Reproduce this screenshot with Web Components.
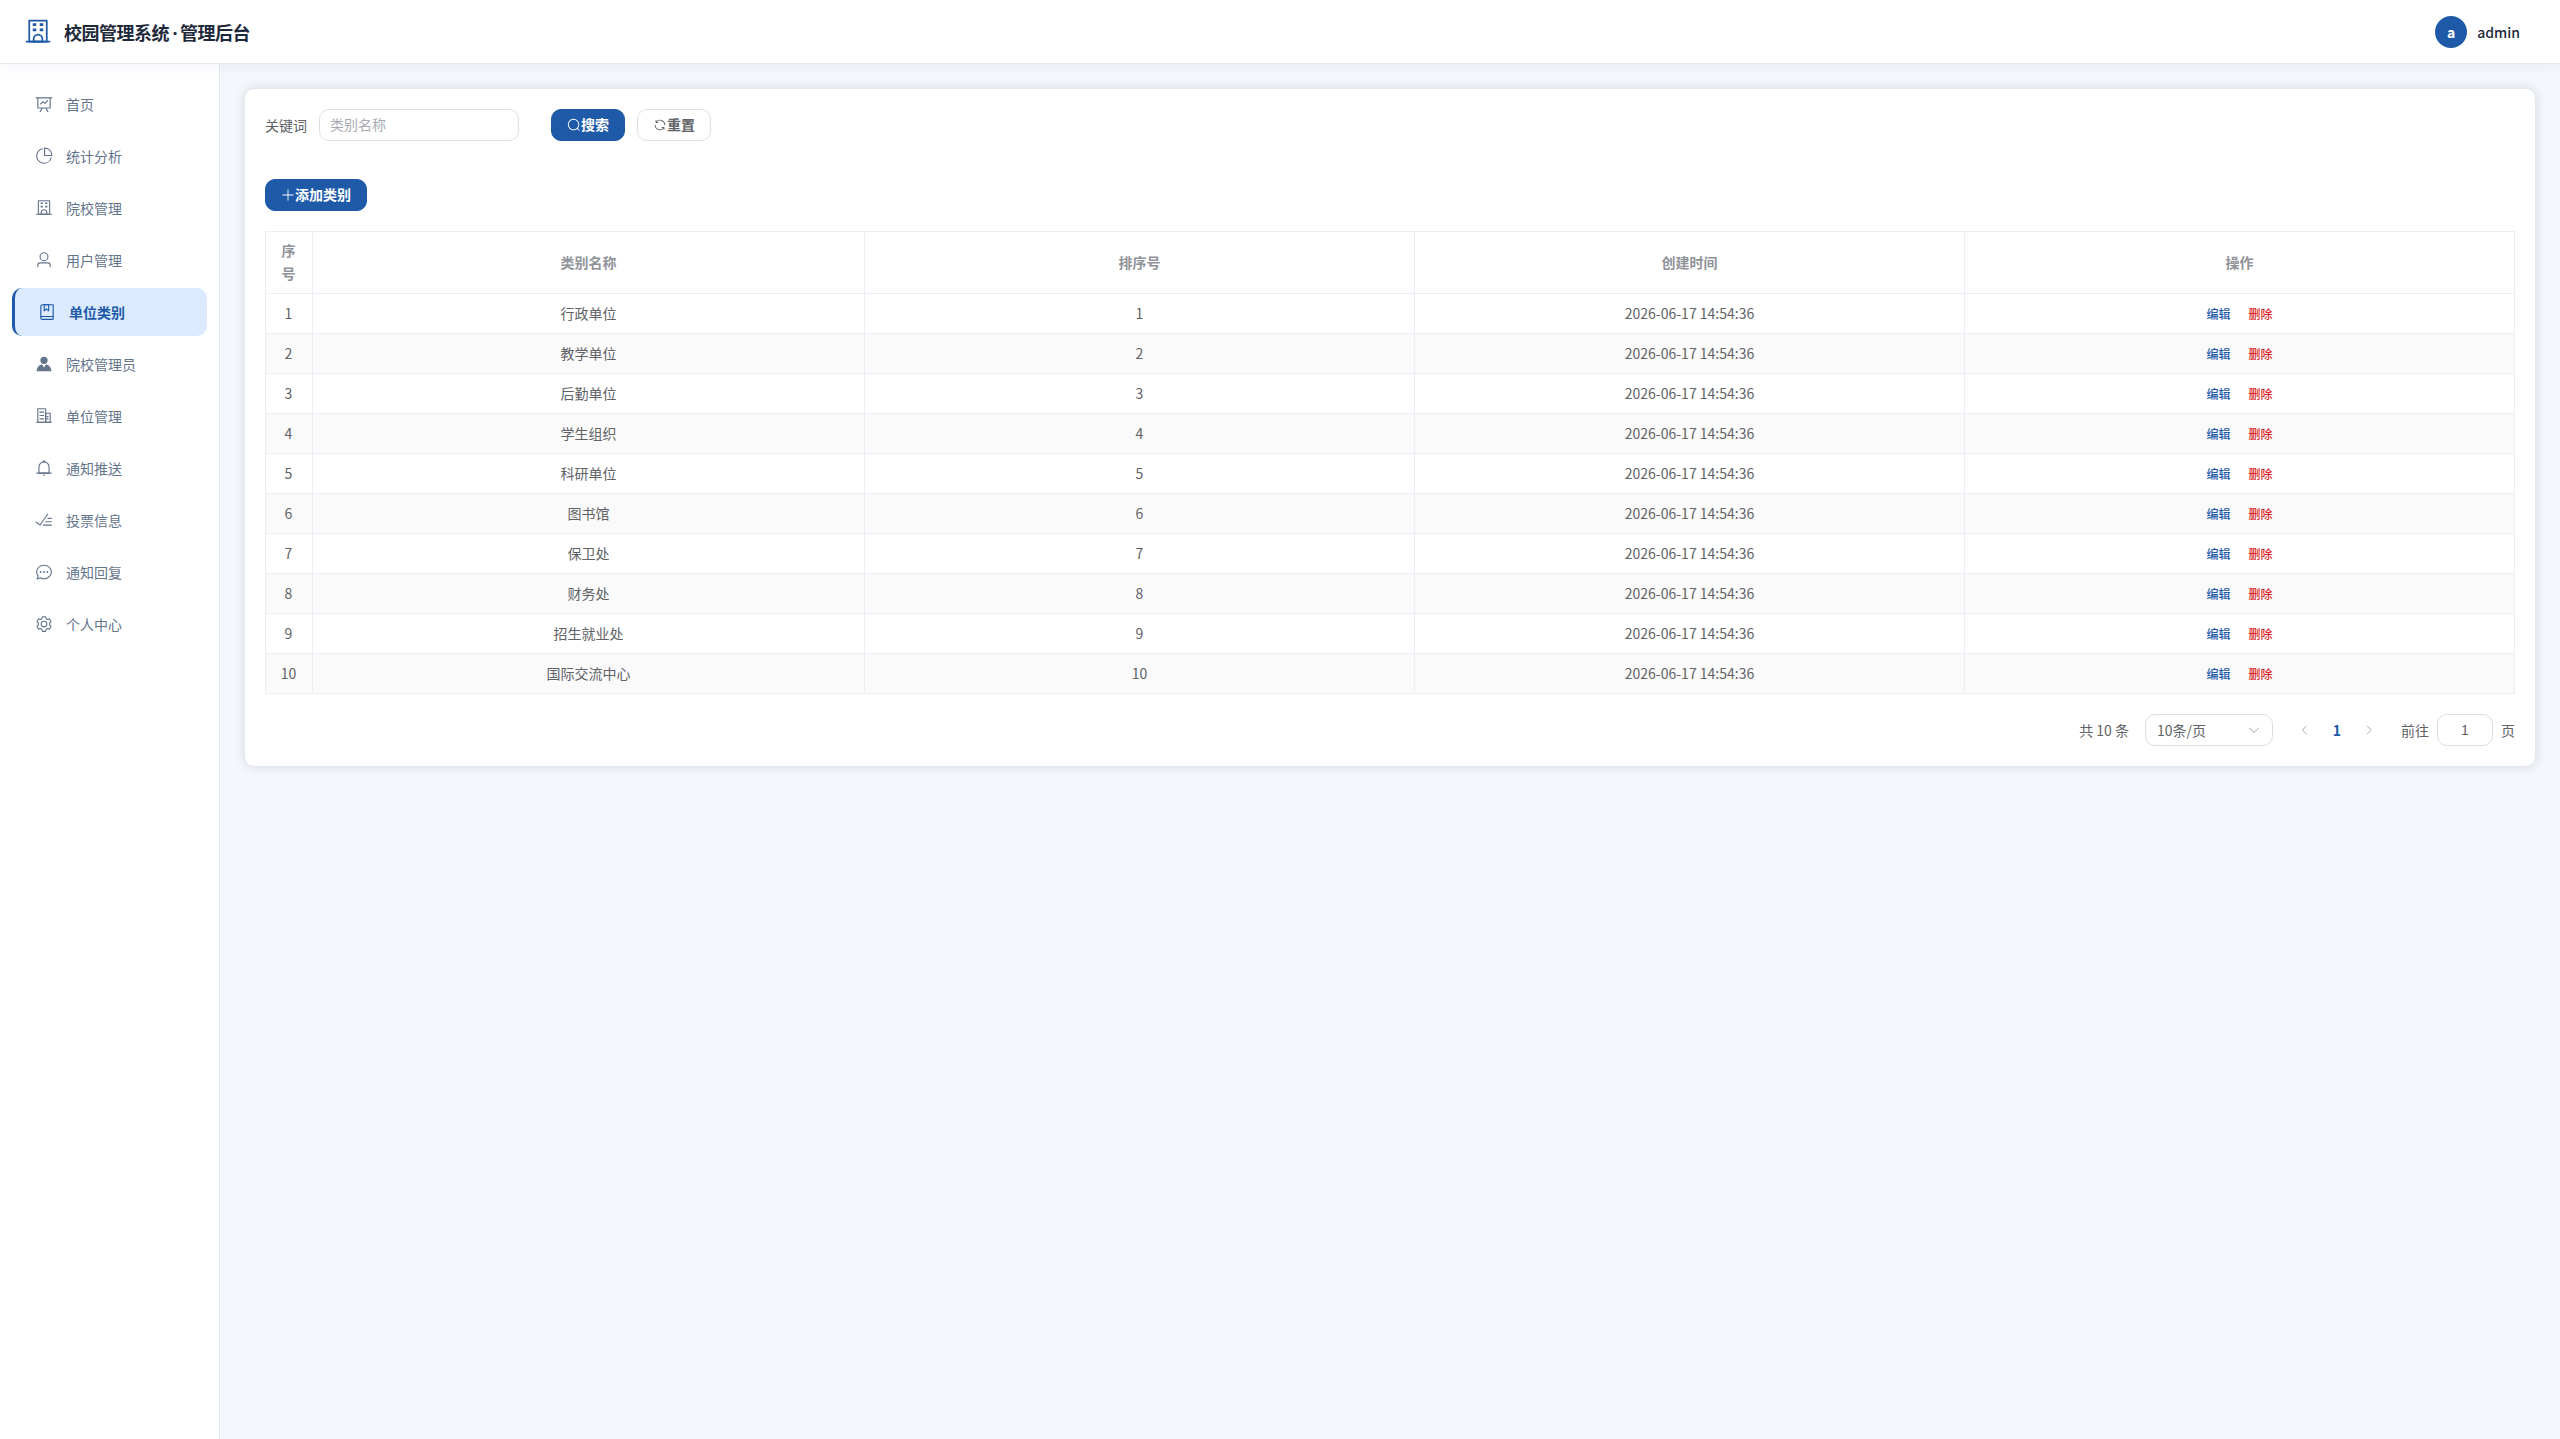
<!DOCTYPE html>
<html lang="zh-CN">
  <head>
    <meta charset="UTF-8" />
    <title>校园管理系统</title>
    <style>
      html,
      body {
        margin: 0;
        height: 100%;
      }
      body {
        font-family: "Noto Sans CJK SC", sans-serif;
        font-size: 14px;
        color: #606266;
        background: #f4f7fb;
        --primary: #1e5aa8;
        --danger: #dc2626;
        --border: #dcdfe6;
        --line: #ebeef5;
      }
    </style>
  </head>
  <body>
    <admin-layout>
      <app-header slot="header" name="校园管理系统" section="管理后台" user="admin"></app-header>
      <side-menu slot="aside">
        <menu-item icon="dataLine">首页</menu-item>
        <menu-item icon="pie">统计分析</menu-item>
        <menu-item icon="school">院校管理</menu-item>
        <menu-item icon="user">用户管理</menu-item>
        <menu-item icon="collection" active>单位类别</menu-item>
        <menu-item icon="avatar">院校管理员</menu-item>
        <menu-item icon="office">单位管理</menu-item>
        <menu-item icon="bell">通知推送</menu-item>
        <menu-item icon="finished">投票信息</menu-item>
        <menu-item icon="chat">通知回复</menu-item>
        <menu-item icon="setting">个人中心</menu-item>
      </side-menu>
      <page-card>
        <search-form></search-form>
        <ui-button type="primary" icon="plus">添加类别</ui-button>
        <category-table></category-table>
        <page-nav total="10"></page-nav>
      </page-card>
    </admin-layout>

    <script>
      const ICONS = {
        dataLine:
          "M359.168 768H160a32 32 0 0 1-32-32V192H64a32 32 0 0 1 0-64h896a32 32 0 1 1 0 64h-64v544a32 32 0 0 1-32 32H665.216l110.848 192h-73.856L591.36 768H433.024L322.176 960H248.32zM832 192H192v512h640zM342.656 534.656a32 32 0 1 1-45.312-45.312L444.992 341.76l125.44 94.08L679.04 300.032a32 32 0 1 1 49.92 39.936L581.632 524.224 451.008 426.24 342.656 534.592z",
        pie: "M448 68.48v64.832A384.128 384.128 0 0 0 512 896a384.128 384.128 0 0 0 378.688-320h64.768A448.128 448.128 0 0 1 64 512 448.128 448.128 0 0 1 448 68.48M576 97.28V448h350.72A384.064 384.064 0 0 0 576 97.28M512 64V33.152A448 448 0 0 1 990.848 512H512z",
        school:
          "M224 128v704h576V128zm-32-64h640a32 32 0 0 1 32 32v768a32 32 0 0 1-32 32H192a32 32 0 0 1-32-32V96a32 32 0 0 1 32-32|M64 832h896v64H64zm256-640h128v96H320z|M384 832h256v-64a128 128 0 1 0-256 0zm128-256a192 192 0 0 1 192 192v128H320V768a192 192 0 0 1 192-192M320 384h128v96H320zm256-192h128v96H576zm0 192h128v96H576z",
        user: "M512 512a192 192 0 1 0 0-384 192 192 0 0 0 0 384m0 64a256 256 0 1 1 0-512 256 256 0 0 1 0 512m320 320v-96a96 96 0 0 0-96-96H288a96 96 0 0 0-96 96v96a32 32 0 1 1-64 0v-96a160 160 0 0 1 160-160h448a160 160 0 0 1 160 160v96a32 32 0 1 1-64 0",
        collection:
          "M192 736h640V128H256a64 64 0 0 0-64 64zm64-672h608a32 32 0 0 1 32 32v672a32 32 0 0 1-32 32H160l-32 57.536V192A128 128 0 0 1 256 64|M240 800a48 48 0 1 0 0 96h592v-96zm0-64h656v160a64 64 0 0 1-64 64H240a112 112 0 0 1 0-224m144-608v250.88l96-76.8 96 76.8V128zm-64-64h320v381.44a32 32 0 0 1-51.968 24.96L480 384l-108.032 86.4A32 32 0 0 1 320 445.44z",
        avatar:
          "M628.736 528.896A416 416 0 0 1 928 928H96a415.872 415.872 0 0 1 299.264-399.104L512 704zM720 304a208 208 0 1 1-416 0 208 208 0 0 1 416 0",
        office:
          "M192 128v704h384V128zm-32-64h448a32 32 0 0 1 32 32v768a32 32 0 0 1-32 32H160a32 32 0 0 1-32-32V96a32 32 0 0 1 32-32|M256 256h256v64H256zm0 192h256v64H256zm0 192h256v64H256zm384-128h128v64H640zm0 128h128v64H640zM64 832h896v64H64z|M640 384v448h192V384zm-32-64h256a32 32 0 0 1 32 32v512a32 32 0 0 1-32 32H608a32 32 0 0 1-32-32V352a32 32 0 0 1 32-32",
        bell: "M512 64a64 64 0 0 1 64 64v64H448v-64a64 64 0 0 1 64-64|M256 768h512V448a256 256 0 1 0-512 0zm256-640a320 320 0 0 1 320 320v384H192V448a320 320 0 0 1 320-320|M96 768h832q32 0 32 32t-32 32H96q-32 0-32-32t32-32m352 128h128a64 64 0 0 1-128 0",
        finished:
          "M280.768 753.728 691.456 167.04a32 32 0 1 1 52.416 36.672L314.24 817.472a32 32 0 0 1-45.44 7.296l-230.4-172.8a32 32 0 0 1 38.4-51.2zM736 448a32 32 0 1 1 0-64h192a32 32 0 1 1 0 64zM608 640a32 32 0 0 1 0-64h319.936a32 32 0 1 1 0 64zM480 832a32 32 0 1 1 0-64h447.936a32 32 0 1 1 0 64z",
        chat: "m174.72 855.68 135.296-45.12 23.68 11.84C388.096 849.536 448.576 864 512 864c211.84 0 384-166.784 384-352S723.84 160 512 160 128 326.784 128 512c0 69.12 24.96 139.264 70.848 199.232l22.08 28.8-46.272 115.584zm-45.248 82.56A32 32 0 0 1 89.6 896l58.368-145.92C94.72 680.32 64 596.864 64 512 64 299.904 256 96 512 96s448 203.904 448 416-192 416-448 416a461.06 461.06 0 0 1-206.912-48.384l-175.616 58.56z|M512 563.2a51.2 51.2 0 1 1 0-102.4 51.2 51.2 0 0 1 0 102.4m192 0a51.2 51.2 0 1 1 0-102.4 51.2 51.2 0 0 1 0 102.4m-384 0a51.2 51.2 0 1 1 0-102.4 51.2 51.2 0 0 1 0 102.4",
        setting:
          "M600.704 64a32 32 0 0 1 30.464 22.208l35.2 109.376c14.784 7.232 28.928 15.36 42.432 24.512l112.384-24.192a32 32 0 0 1 34.432 15.36L944.32 364.8a32 32 0 0 1-4.032 37.504l-77.12 85.12a357 357 0 0 1 0 49.024l77.12 85.248a32 32 0 0 1 4.032 37.504l-88.704 153.6a32 32 0 0 1-34.432 15.296L708.8 803.904c-13.44 9.088-27.648 17.28-42.368 24.512l-35.264 109.376A32 32 0 0 1 600.704 960H423.296a32 32 0 0 1-30.464-22.208L357.696 828.48a352 352 0 0 1-42.56-24.64l-112.32 24.256a32 32 0 0 1-34.432-15.36L79.68 659.2a32 32 0 0 1 4.032-37.504l77.12-85.248a357 357 0 0 1 0-48.896l-77.12-85.248A32 32 0 0 1 79.68 364.8l88.704-153.6a32 32 0 0 1 34.432-15.296l112.32 24.256c13.568-9.152 27.776-17.408 42.56-24.64l35.2-109.312A32 32 0 0 1 423.232 64H600.64zm-23.424 64H446.72l-36.352 113.088-24.512 11.968a294 294 0 0 0-34.816 20.096l-22.656 15.36-116.224-25.088-65.28 113.152 79.68 88.192-1.92 27.136a293 293 0 0 0 0 40.192l1.92 27.136-79.808 88.192 65.344 113.152 116.224-25.024 22.656 15.296a294 294 0 0 0 34.816 20.096l24.512 11.968L446.72 896h130.688l36.48-113.152 24.448-11.904a288 288 0 0 0 34.752-20.096l22.592-15.296 116.288 25.024 65.28-113.152-79.744-88.192 1.92-27.136a293 293 0 0 0 0-40.256l-1.92-27.136 79.808-88.128-65.344-113.152-116.288 24.96-22.592-15.232a288 288 0 0 0-34.752-20.096l-24.448-11.904L577.344 128zM512 320a192 192 0 1 1 0 384 192 192 0 0 1 0-384m0 64a128 128 0 1 0 0 256 128 128 0 0 0 0-256",
        search:
          "m795.904 750.72 124.992 124.928a32 32 0 0 1-45.248 45.248L750.656 795.904a416 416 0 1 1 45.248-45.248zM480 832a352 352 0 1 0 0-704 352 352 0 0 0 0 704",
        refresh:
          "M771.776 794.88A384 384 0 0 1 128 512h64a320 320 0 0 0 555.712 216.448H654.72a32 32 0 1 1 0-64h149.056a32 32 0 0 1 32 32v148.928a32 32 0 1 1-64 0v-50.56zM276.288 295.616h92.992a32 32 0 0 1 0 64H220.16a32 32 0 0 1-32-32V178.56a32 32 0 0 1 64 0v50.56A384 384 0 0 1 896.128 512h-64a320 320 0 0 0-555.776-216.384z",
        plus: "M480 480V128a32 32 0 0 1 64 0v352h352a32 32 0 1 1 0 64H544v352a32 32 0 1 1-64 0V544H128a32 32 0 0 1 0-64z",
        down: "M831.872 340.864 512 652.672 192.128 340.864a30.592 30.592 0 0 0-42.752 0 29.12 29.12 0 0 0 0 41.6L489.664 714.24a32 32 0 0 0 44.672 0l340.288-331.712a29.12 29.12 0 0 0 0-41.728 30.592 30.592 0 0 0-42.752 0z",
        left: "M609.408 149.376 277.76 489.6a32 32 0 0 0 0 44.672l331.648 340.352a29.12 29.12 0 0 0 41.728 0 30.592 30.592 0 0 0 0-42.752L339.264 511.936l311.872-319.872a30.592 30.592 0 0 0 0-42.688 29.12 29.12 0 0 0-41.728 0",
        right:
          "M340.864 149.312a30.592 30.592 0 0 0 0 42.752L652.736 512 340.864 831.872a30.592 30.592 0 0 0 0 42.752 29.12 29.12 0 0 0 41.728 0L714.24 534.336a32 32 0 0 0 0-44.672L382.592 149.376a29.12 29.12 0 0 0-41.728 0z",
      };

      // Base: renders the markup of the class in an open shadow root
      class BaseElement extends HTMLElement {
        connectedCallback() {
          if (this.shadowRoot) return;
          const template = document.createElement("template");
          template.innerHTML = this.render();
          this.attachShadow({ mode: "open" }).appendChild(
            template.content.cloneNode(true)
          );
        }
      }

      class UiIcon extends BaseElement {
        render() {
          const paths = ICONS[this.getAttribute("name")]
            .split("|")
            .map((d) => `<path d="${d}"/>`)
            .join("");
          return `
          <style>
            :host { display: inline-flex; width: 1em; height: 1em; flex: none; }
            svg { width: 1em; height: 1em; fill: currentColor; }
          </style>
          <svg viewBox="0 0 1024 1024">${paths}</svg>`;
        }
      }

      class AdminLayout extends BaseElement {
        render() {
          return `
          <style>
            :host {
              display: grid;
              grid-template: 64px 1fr / 220px 1fr;
              height: 100%;
            }
            .header { grid-column: 1 / 3; z-index: 1; }
            .aside {
              background: #fff;
              border-right: 1px solid #e2e8f0;
            }
            main { padding: 24px; min-width: 0; }
          </style>
          <div class="header"><slot name="header"></slot></div>
          <div class="aside"><slot name="aside"></slot></div>
          <main><slot></slot></main>`;
        }
      }

      class AppHeader extends BaseElement {
        render() {
          const user = this.getAttribute("user");
          return `
          <style>
            :host {
              display: flex;
              align-items: center;
              justify-content: space-between;
              box-sizing: border-box;
              height: 64px;
              padding: 0 40px 0 24px;
              background: #fff;
              border-bottom: 1px solid #e2e8f0;
              box-shadow: 0 2px 12px rgba(30, 64, 175, 0.06);
            }
            .brand, .user { display: flex; align-items: center; }
            .brand { gap: 12px; }
            .brand ui-icon { font-size: 28px; color: var(--primary); }
            .title {
              font-size: 18px;
              font-weight: 700;
              letter-spacing: -0.5px;
              color: #1e293b;
            }
            /* the CJK middle dot is too wide */
            .dot {
              font-family: "Noto Sans", sans-serif;
              line-height: 1;
              letter-spacing: -1.3px;
            }
            .user { gap: 10px; color: #1e293b; font-weight: 500; }
            .avatar {
              width: 32px;
              height: 32px;
              line-height: 32px;
              border-radius: 50%;
              background: var(--primary);
              color: #fff;
              font-weight: 600;
              text-align: center;
            }
          </style>
          <div class="brand">
            <ui-icon name="school"></ui-icon>
            <span class="title">${this.getAttribute("name")} <span class="dot">·</span> ${this.getAttribute("section")}</span>
          </div>
          <div class="user">
            <span class="avatar">${user[0]}</span>
            <span>${user}</span>
          </div>`;
        }
      }

      class SideMenu extends BaseElement {
        render() {
          return `
          <style>
            :host {
              display: flex;
              flex-direction: column;
              gap: 4px;
              padding: 16px 12px;
            }
          </style>
          <slot></slot>`;
        }
      }

      class MenuItem extends BaseElement {
        render() {
          return `
          <style>
            :host {
              display: flex;
              align-items: center;
              box-sizing: border-box;
              height: 48px;
              line-height: 48px;
              padding: 0 20px;
              border-radius: 10px;
              color: #64748b;
            }
            :host([active]) {
              background: #dbeafe;
              border-left: 3px solid var(--primary);
              color: var(--primary);
              font-weight: 600;
            }
            ui-icon {
              font-size: 18px;
              width: 24px;
              justify-content: center;
              margin-right: 10px;
            }
          </style>
          <ui-icon name="${this.getAttribute("icon")}"></ui-icon>
          <span><slot></slot></span>`;
        }
      }

      class PageCard extends BaseElement {
        render() {
          return `
          <style>
            :host {
              display: flex;
              flex-direction: column;
              align-items: flex-start;
              padding: 20px;
              background: #fff;
              border: 1px solid #e2e8f0;
              border-radius: 10px;
              box-shadow: 0 0 12px rgba(0, 0, 0, 0.12);
            }
          </style>
          <slot></slot>`;
        }
      }

      class UiButton extends BaseElement {
        render() {
          return `
          <style>
            :host {
              display: inline-flex;
              align-items: center;
              justify-content: center;
              box-sizing: border-box;
              height: 32px;
              padding: 0 15px;
              line-height: 1;
              border: 1px solid var(--border);
              border-radius: 10px;
              background: #fff;
              font-family: "Liberation Sans", "Noto Sans CJK SC", sans-serif;
              font-weight: 600;
              cursor: pointer;
            }
            :host([type="primary"]) {
              background: var(--primary);
              border-color: var(--primary);
              color: #fff;
            }
            span { height: 14px; }
          </style>
          <ui-icon name="${this.getAttribute("icon")}"></ui-icon>
          <span><slot></slot></span>`;
        }
      }

      class SearchForm extends BaseElement {
        render() {
          return `
          <style>
            :host { display: flex; margin-bottom: 38px; }
            label { line-height: 32px; padding-right: 12px; }
            input {
              box-sizing: border-box;
              width: 200px;
              height: 32px;
              margin: 0 32px 0 0;
              padding: 0 10px;
              border: 1px solid var(--border);
              border-radius: 10px;
              font: 14px "Liberation Sans", "Noto Sans CJK SC", sans-serif;
              color: inherit;
            }
            input::placeholder { color: #a8abb2; }
            ui-button + ui-button { margin-left: 12px; }
          </style>
          <label>关键词</label>
          <input placeholder="类别名称" />
          <ui-button type="primary" icon="search">搜索</ui-button>
          <ui-button icon="refresh">重置</ui-button>`;
        }
      }

      class CategoryTable extends BaseElement {
        render() {
          const names = [
            "行政单位",
            "教学单位",
            "后勤单位",
            "学生组织",
            "科研单位",
            "图书馆",
            "保卫处",
            "财务处",
            "招生就业处",
            "国际交流中心",
          ];
          const rows = names
            .map(
              (name, i) => `
            <tr>
              <td>${i + 1}</td>
              <td>${name}</td>
              <td>${i + 1}</td>
              <td>2026-06-17 14:54:36</td>
              <td class="ops"><div><a>编辑</a><a class="danger">删除</a></div></td>
            </tr>`
            )
            .join("");
          return `
          <style>
            :host { display: block; width: 100%; margin: 20px 0; }
            table {
              width: 100%;
              table-layout: fixed;
              border-collapse: separate;
              border-spacing: 0;
              box-shadow: inset 1px 1px 0 var(--line);
            }
            th, td {
              box-sizing: border-box;
              padding: 8px 12px;
              line-height: 23px;
              text-align: center;
              border-right: 1px solid var(--line);
              border-bottom: 1px solid var(--line);
            }
            th { color: #909399; font-weight: 600; }
            td { height: 40px; }
            tbody tr:nth-child(even) td { background: #fafafa; }
            tr > :first-child { box-shadow: inset 1px 0 0 var(--line); }
            .ops div { display: flex; justify-content: center; gap: 18px; }
            a { font-size: 12px; font-weight: 500; color: var(--primary); }
            .danger { color: var(--danger); }
          </style>
          <table>
            <colgroup>
              <col width="48" /><col width="552" /><col /><col /><col />
            </colgroup>
            <thead>
              <tr>
                <th>序号</th>
                <th>类别名称</th>
                <th>排序号</th>
                <th>创建时间</th>
                <th>操作</th>
              </tr>
            </thead>
            <tbody>${rows}</tbody>
          </table>`;
        }
      }

      class PageNav extends BaseElement {
        render() {
          return `
          <style>
            :host {
              display: flex;
              align-items: center;
              align-self: flex-end;
              height: 32px;
            }
            .select {
              display: flex;
              align-items: center;
              justify-content: space-between;
              box-sizing: border-box;
              width: 128px;
              height: 32px;
              margin: 0 16px;
              padding: 0 11px;
              border: 1px solid var(--border);
              border-radius: 10px;
            }
            .select ui-icon { color: #a8abb2; }
            .btn {
              display: flex;
              align-items: center;
              justify-content: center;
              width: 32px;
              height: 32px;
            }
            .btn ui-icon { font-size: 12px; color: #a8abb2; }
            .current { color: var(--primary); font-weight: 700; }
            .jump { display: flex; align-items: center; gap: 8px; margin-left: 16px; }
            input {
              box-sizing: border-box;
              width: 56px;
              height: 32px;
              margin: 0;
              padding: 0 11px;
              border: 1px solid var(--border);
              border-radius: 10px;
              font: 14px "Liberation Sans", sans-serif;
              color: inherit;
              text-align: center;
            }
          </style>
          <span>共 ${this.getAttribute("total")} 条</span>
          <div class="select"><span>10条/页</span><ui-icon name="down"></ui-icon></div>
          <span class="btn"><ui-icon name="left"></ui-icon></span>
          <span class="btn current">1</span>
          <span class="btn"><ui-icon name="right"></ui-icon></span>
          <div class="jump"><span>前往</span><input value="1" /><span>页</span></div>`;
        }
      }

      customElements.define("ui-icon", UiIcon);
      customElements.define("ui-button", UiButton);
      customElements.define("admin-layout", AdminLayout);
      customElements.define("app-header", AppHeader);
      customElements.define("side-menu", SideMenu);
      customElements.define("menu-item", MenuItem);
      customElements.define("page-card", PageCard);
      customElements.define("search-form", SearchForm);
      customElements.define("category-table", CategoryTable);
      customElements.define("page-nav", PageNav);
    </script>
  </body>
</html>
